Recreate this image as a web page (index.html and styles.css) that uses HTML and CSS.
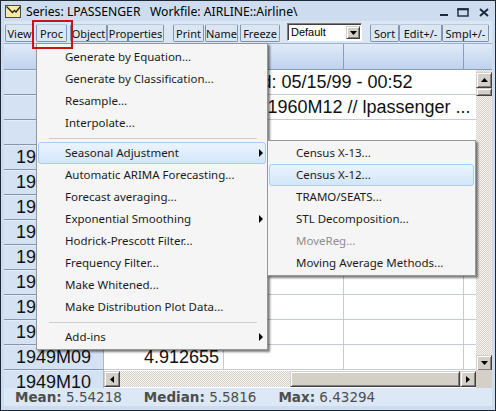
FILE: index.html
```html
<!DOCTYPE html>
<html>
<head>
<meta charset="utf-8">
<link rel="stylesheet" href="styles.css">
</head>
<body>
<div class="window">
  <div class="titlebar">
    <svg class="appicon" width="16" height="14" viewBox="0 0 16 14">
      <rect x="0.5" y="0.5" width="15" height="12" fill="#fbe9a6" stroke="#4a4a4a"/>
      <polyline points="1.5,1.5 7.5,7.5 9.5,5.5 11,7 15,2" fill="none" stroke="#202020" stroke-width="1.3"/>
    </svg>
    <span class="title">Series: LPASSENGER   Workfile: AIRLINE::Airline\</span>
    <svg class="controls" width="54" height="20" viewBox="0 0 54 20">
      <rect x="3" y="13" width="8" height="2" fill="#1c2a3c"/>
      <rect x="21" y="8" width="10" height="7" fill="none" stroke="#1c2a3c" stroke-width="1.4"/>
      <rect x="20.3" y="7.3" width="11.4" height="2" fill="#1c2a3c"/>
      <path d="M43 8 L51 15 M51 8 L43 15" stroke="#1c2a3c" stroke-width="2"/>
    </svg>
  </div>

  <div class="toolbar">
    <span class="tb b-view">View</span>
    <span class="tb b-proc">Proc</span>
    <span class="tb b-object">Object</span>
    <span class="tb b-props">Properties</span>
    <span class="tb b-print">Print</span>
    <span class="tb b-name">Name</span>
    <span class="tb b-freeze">Freeze</span>
    <span class="combo"><span class="combo-text">Default</span><span class="combo-btn"><svg width="7" height="4" viewBox="0 0 7 4"><polygon points="0,0 7,0 3.5,4" fill="#000"/></svg></span></span>
    <span class="tb b-sort">Sort</span>
    <span class="tb b-edit">Edit+/-</span>
    <span class="tb b-smpl">Smpl+/-</span>
  </div>

  <div class="grid">
    <div class="hdr">
      <div class="corner"></div>
      <div class="ch"></div>
      <div class="ch"></div>
      <div class="ch"></div>
      <div class="ch-rest"></div>
    </div>
    <div class="main">
      <div class="rows">
        <div class="row"><div class="rh"></div><div class="span">Last updated: 05/15/99 - 00:52</div></div>
        <div class="row"><div class="rh"></div><div class="span">Modified: 1949M01 1960M12 // lpassenger ...</div></div>
        <div class="row"><div class="rh"></div><div class="span"></div></div>
        <div class="row"><div class="rh">1949M01</div><div class="c"></div><div class="c"></div><div class="c"></div><div class="c last"></div></div>
        <div class="row"><div class="rh">1949M02</div><div class="c"></div><div class="c"></div><div class="c"></div><div class="c last"></div></div>
        <div class="row"><div class="rh">1949M03</div><div class="c"></div><div class="c"></div><div class="c"></div><div class="c last"></div></div>
        <div class="row"><div class="rh">1949M04</div><div class="c"></div><div class="c"></div><div class="c"></div><div class="c last"></div></div>
        <div class="row"><div class="rh">1949M05</div><div class="c"></div><div class="c"></div><div class="c"></div><div class="c last"></div></div>
        <div class="row"><div class="rh">1949M06</div><div class="c"></div><div class="c"></div><div class="c"></div><div class="c last"></div></div>
        <div class="row"><div class="rh">1949M07</div><div class="c"></div><div class="c"></div><div class="c"></div><div class="c last"></div></div>
        <div class="row"><div class="rh">1949M08</div><div class="c"></div><div class="c"></div><div class="c"></div><div class="c last"></div></div>
        <div class="row"><div class="rh">1949M09</div><div class="c">4.912655</div><div class="c"></div><div class="c"></div><div class="c last"></div></div>
      </div>
      <div class="vscroll">
        <div class="sb-btn sb-up"><svg width="7" height="4" viewBox="0 0 7 4"><polygon points="0,4 7,4 3.5,0" fill="#000"/></svg></div>
        <div class="sb-thumb-v"></div>
        <div class="sb-btn sb-down"><svg width="7" height="4" viewBox="0 0 7 4"><polygon points="0,0 7,0 3.5,4" fill="#000"/></svg></div>
      </div>
    </div>
    <div class="bottom">
      <div class="rh rh-cut">1949M10</div>
      <div class="hscroll">
        <div class="sb-btn"><svg width="4" height="7" viewBox="0 0 4 7"><polygon points="4,0 4,7 0,3.5" fill="#000"/></svg></div>
        <div class="h-track"></div>
        <div class="sb-thumb-h"></div>
        <div class="sb-btn"><svg width="4" height="7" viewBox="0 0 4 7"><polygon points="0,0 0,7 4,3.5" fill="#000"/></svg></div>
      </div>
      <div class="sizer"></div>
    </div>
  </div>

  <div class="status">
    <span><b>Mean:</b> 5.54218</span>
    <span><b>Median:</b> 5.5816</span>
    <span><b>Max:</b> 6.43294</span>
  </div>

  <div class="menu">
    <div class="mi">Generate by Equation...</div>
    <div class="mi">Generate by Classification...</div>
    <div class="mi">Resample...</div>
    <div class="mi">Interpolate...</div>
    <div class="sep"></div>
    <div class="mi hl">Seasonal Adjustment<span class="arrow"></span></div>
    <div class="mi">Automatic ARIMA Forecasting...</div>
    <div class="mi">Forecast averaging...</div>
    <div class="mi">Exponential Smoothing<span class="arrow"></span></div>
    <div class="mi">Hodrick-Prescott Filter...</div>
    <div class="mi">Frequency Filter...</div>
    <div class="mi">Make Whitened...</div>
    <div class="mi">Make Distribution Plot Data...</div>
    <div class="sep"></div>
    <div class="mi">Add-ins<span class="arrow"></span></div>
  </div>

  <div class="menu submenu">
    <div class="mi">Census X-13...</div>
    <div class="mi hl">Census X-12...</div>
    <div class="mi">TRAMO/SEATS...</div>
    <div class="mi">STL Decomposition...</div>
    <div class="mi disabled">MoveReg...</div>
    <div class="mi">Moving Average Methods...</div>
  </div>

  <div class="redbox"></div>
</div>
</body>
</html>
```

FILE: styles.css
```css
* { box-sizing: border-box; }
html, body { margin: 0; padding: 0; }
body {
  width: 496px;
  height: 411px;
  overflow: hidden;
  background: #ffffff;
  font-family: "Noto Sans", sans-serif;
}

.window {
  position: relative;
  width: 496px;
  height: 411px;
  border: 1px solid #1f2a36;
  background: #cddcee;
  padding: 0 3px 4px 3px;
  display: flex;
  flex-direction: column;
}

/* title bar */
.titlebar {
  height: 20px;
  flex: none;
  display: flex;
  align-items: center;
  padding-left: 1px;
}
.appicon { flex: none; margin-top: 1px; }
.title {
  margin-left: 5px;
  font-size: 12.2px;
  color: #000;
  white-space: pre;
}
.controls { margin-left: auto; margin-right: 1px; flex: none; }

/* toolbar */
.toolbar {
  height: 22px;
  flex: none;
  display: flex;
  align-items: flex-start;
  padding-top: 3px;
  background: #dbe6f3;
  font-size: 11px;
  color: #111;
}
.tb {
  height: 18px;
  flex: none;
  display: flex;
  align-items: center;
  justify-content: center;
  border: 1px solid;
  border-color: #b9c8db #7f94ae #7f94ae #7f94ae;
  border-radius: 2px;
  white-space: nowrap;
}
.b-view { width: 29px; margin-left: 1px; }
.b-proc { width: 31px; margin-left: 2px; }
.b-object { width: 37px; margin-left: 3px; }
.b-props { width: 57px; margin-left: 0; }
.b-print { width: 31px; margin-left: 9px; }
.b-name { width: 33px; margin-left: 1px; }
.b-freeze { width: 40px; margin-left: 2px; }
.b-sort { width: 29px; margin-left: 8px; }
.b-edit { width: 43px; margin-left: 0; }
.b-smpl { width: 47px; margin-left: 0; }

.combo {
  position: relative;
  width: 75px;
  height: 18px;
  margin-left: 7px;
  margin-top: -1px;
  flex: none;
  background: #fff;
  border: 1px solid;
  border-color: #808080 #ffffff #ffffff #808080;
  box-shadow: inset 1px 1px #404040;
  font-family: "Liberation Sans", sans-serif;
  font-size: 11px;
  color: #000;
  display: flex;
  align-items: center;
  padding-left: 3px;
}
.combo-btn {
  position: absolute;
  right: 1px;
  top: 2px;
  width: 14px;
  height: 13px;
  background: #d4d0c8;
  border: 1px solid;
  border-color: #d4d0c8 #404040 #404040 #d4d0c8;
  box-shadow: inset 1px 1px #fff, inset -1px -1px #808080;
  display: flex;
  align-items: center;
  justify-content: center;
}

/* grid */
.grid {
  height: 345px;
  flex: none;
  display: flex;
  flex-direction: column;
  background: #fff;
  font-family: "Liberation Sans", sans-serif;
  font-size: 18px;
  color: #111;
}
.hdr {
  height: 27px;
  flex: none;
  display: flex;
  border-top: 1px solid #9fb2cb;
  border-bottom: 1px solid #8b9cb4;
  background: linear-gradient(#e0eaf7, #bfd3ee);
}
.hdr .corner { width: 100px; flex: none; border-right: 1px solid #8b9cb4; }
.hdr .ch { width: 120px; flex: none; border-right: 1px solid #8b9cb4; }
.hdr .ch-rest { flex: 1; }

.main { height: 300px; flex: none; display: flex; }
.rows { flex: 1; overflow: hidden; }
.row { height: 25px; display: flex; }
.rh {
  width: 100px;
  height: 25px;
  flex: none;
  background: #d4e2f4;
  border-right: 1px solid #a9b7ca;
  border-bottom: 1px solid #8595ac;
  box-shadow: inset 0 1px #e4ecf8;
  display: flex;
  align-items: center;
  justify-content: center;
}
.c {
  width: 120px;
  flex: none;
  border-right: 1px solid #c5cbd4;
  border-bottom: 1px solid #c5cbd4;
  display: flex;
  align-items: center;
  justify-content: flex-end;
  padding-right: 4px;
}
.c.last { flex: 1; width: auto; border-right: none; }
.span {
  flex: 1;
  border-bottom: 1px solid #c5cbd4;
  display: flex;
  align-items: center;
  justify-content: center;
  white-space: nowrap;
  overflow: hidden;
}

.vscroll {
  width: 16px;
  flex: none;
  display: flex;
  flex-direction: column;
  background-color: #f4f3ef;
  background-image: repeating-conic-gradient(#d4d0c8 0 25%, #f7f6f3 0 50%);
  background-size: 2px 2px;
}
.sb-btn {
  width: 16px;
  height: 16px;
  flex: none;
  background: #d4d0c8;
  border: 1px solid;
  border-color: #d4d0c8 #404040 #404040 #d4d0c8;
  box-shadow: inset 1px 1px #ffffff, inset -1px -1px #808080;
  display: flex;
  align-items: center;
  justify-content: center;
}
.sb-up { margin-top: 2px; }
.sb-down { margin-top: auto; margin-bottom: -1px; }
.sb-thumb-v {
  width: 16px;
  height: 8px;
  flex: none;
  background: #d4d0c8;
  border: 1px solid;
  border-color: #d4d0c8 #404040 #404040 #d4d0c8;
  box-shadow: inset 1px 1px #ffffff, inset -1px -1px #808080;
}

.bottom { height: 18px; flex: none; display: flex; overflow: hidden; background: #fff; }
.rh-cut { align-self: flex-start; }
.hscroll {
  width: 372px;
  height: 16px;
  margin-top: 1px;
  flex: none;
  display: flex;
}
.h-track {
  width: 170px;
  flex: none;
  background-color: #f4f3ef;
  background-image: repeating-conic-gradient(#d4d0c8 0 25%, #f7f6f3 0 50%);
  background-size: 2px 2px;
}
.sb-thumb-h {
  width: 170px;
  flex: none;
  background: #d4d0c8;
  border: 1px solid;
  border-color: #d4d0c8 #404040 #404040 #d4d0c8;
  box-shadow: inset 1px 1px #ffffff, inset -1px -1px #808080;
}
.sizer { flex: 1; background: #d4d0c8; }

/* status bar */
.status {
  height: 18px;
  flex: none;
  display: flex;
  align-items: center;
  gap: 22px;
  padding-left: 11px;
  background: #dce8f5;
  font-family: "DejaVu Sans", sans-serif;
  font-size: 13.5px;
  color: #4e4e4e;
  white-space: nowrap;
}
.status b { font-weight: bold; }

/* menus */
.menu {
  position: absolute;
  left: 35px;
  top: 42px;
  width: 232px;
  background: #f5f5f5;
  border: 1px solid #979797;
  padding: 2px 1px 1px 1px;
  box-shadow: 2px 2px 2px rgba(0, 0, 0, 0.5);
  font-family: "Noto Sans", sans-serif;
  font-size: 11.5px;
  color: #1b1b1b;
  z-index: 5;
}
.submenu {
  left: 266px;
  top: 139px;
  width: 209px;
  padding: 1px;
  z-index: 6;
}
.mi {
  position: relative;
  height: 22px;
  line-height: 20px;
  border: 1px solid transparent;
  padding-left: 26px;
  white-space: nowrap;
}
.mi.hl {
  border-color: #a8cdf0;
  border-radius: 3px;
  background: linear-gradient(#ebf4fd, #d3e6fa);
}
.mi.disabled { color: #8d8d8d; }
.sep { height: 8px; padding-top: 4px; margin: 0 9px 0 11px; }
.sep::before { content: ""; display: block; height: 1px; background: #cccccc; }
.arrow {
  position: absolute;
  right: 2px;
  top: 6px;
  width: 0;
  height: 0;
  border-left: 4px solid #000;
  border-top: 4px solid transparent;
  border-bottom: 4px solid transparent;
}

.redbox {
  position: absolute;
  left: 31px;
  top: 19px;
  width: 41px;
  height: 29px;
  border: 2px solid #c81414;
  z-index: 10;
}
```
